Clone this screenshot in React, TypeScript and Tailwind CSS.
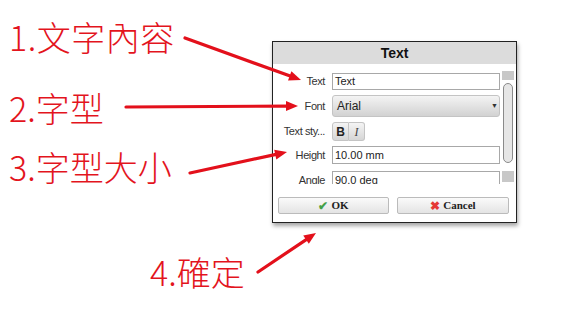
import React from "react";

type Arrow = { x1: number; y1: number; x2: number; y2: number };

const arrows: Arrow[] = [
  { x1: 185, y1: 38, x2: 301, y2: 80 },
  { x1: 126, y1: 107, x2: 298, y2: 106 },
  { x1: 190, y1: 173, x2: 287, y2: 152 },
  { x1: 258, y1: 272, x2: 316, y2: 233 },
];

function head(a: Arrow) {
  const dx = a.x2 - a.x1;
  const dy = a.y2 - a.y1;
  const len = Math.hypot(dx, dy);
  const ux = dx / len;
  const uy = dy / len;
  const L = 12;
  const W = 5;
  const bx = a.x2 - ux * L;
  const by = a.y2 - uy * L;
  const p1 = `${a.x2},${a.y2}`;
  const p2 = `${bx - uy * W},${by + ux * W}`;
  const p3 = `${bx + uy * W},${by - ux * W}`;
  return { pts: `${p1} ${p2} ${p3}`, ex: bx + ux * 2, ey: by + uy * 2 };
}

function Arrows() {
  return (
    <svg className="absolute inset-0 pointer-events-none" width={570} height={314}>
      {arrows.map((a, i) => {
        const h = head(a);
        return (
          <g key={i}>
            <line x1={a.x1} y1={a.y1} x2={h.ex} y2={h.ey} stroke="#e3101b" strokeWidth={3.2} strokeLinecap="round" />
            <polygon points={h.pts} fill="#e3101b" />
          </g>
        );
      })}
    </svg>
  );
}

const label =
  "h-[40px] leading-[40px] text-[34px] text-[#e3141d] whitespace-nowrap font-light";

function Row({ name, children, h, mt }: { name: string; children: React.ReactNode; h: string; mt: string }) {
  return (
    <div className={`flex items-center shrink-0 ${h} ${mt}`}>
      <div className="w-[53px] pr-[1px] text-right text-[11px] tracking-[-0.4px] text-[#333] whitespace-nowrap overflow-hidden">
        {name}
      </div>
      <div className="ml-[6px] flex-1 h-full">{children}</div>
    </div>
  );
}

function Dialog() {
  return (
    <div
      className="w-[245px] h-[182px] border border-[#222] bg-white shadow-[1px_3px_4px_rgba(0,0,0,0.35)] flex flex-col"
      style={{ fontFamily: '"Liberation Sans", Arial, sans-serif' }}
    >
      <div className="h-[22px] bg-[#dcdcdc] flex items-center justify-center text-[14px] font-bold text-[#111]">
        Text
      </div>
      <div className="flex h-[120px] overflow-hidden">
        <div className="flex-1 flex flex-col pt-[9px]">
          <Row name="Text" h="h-[17px]" mt="mt-0">
            <div className="h-full border border-[#a8a8a8] bg-white text-[11px] leading-[15px] px-[2px] text-[#222]">
              Text
            </div>
          </Row>
          <Row name="Font" h="h-[22px]" mt="mt-[5px]">
            <div className="h-full rounded-[3px] border border-[#c4c4c4] bg-gradient-to-b from-[#f4f4f4] to-[#d2d2d2] text-[12px] flex items-center justify-between px-[4px] text-[#222]">
              <span>Arial</span>
              <span className="text-[7px] text-[#333] mr-[-3px]">▼</span>
            </div>
          </Row>
          <Row name="Text sty..." h="h-[19px]" mt="mt-[5px]">
            <div className="h-full flex">
              <div className="w-[17px] h-full rounded-l-[3px] border border-[#c4c4c4] bg-gradient-to-b from-[#f4f4f4] to-[#d6d6d6] flex items-center justify-center text-[12px] font-bold text-[#222]">
                B
              </div>
              <div className="w-[16px] h-full rounded-r-[3px] border border-l-0 border-[#c4c4c4] bg-gradient-to-b from-[#f4f4f4] to-[#d6d6d6] flex items-center justify-center text-[12px] italic text-[#444]" style={{ fontFamily: '"Liberation Serif", serif' }}>
                I
              </div>
            </div>
          </Row>
          <Row name="Height" h="h-[18px]" mt="mt-[5px]">
            <div className="h-full border border-[#a8a8a8] bg-white text-[11px] leading-[16px] px-[2px] text-[#222]">
              10.00 mm
            </div>
          </Row>
          <Row name="Angle" h="h-[18px]" mt="mt-[7px]">
            <div className="h-full border border-[#a8a8a8] bg-white text-[11px] leading-[16px] px-[2px] text-[#222]">
              90.0 deg
            </div>
          </Row>
        </div>
        <div className="w-[16px] flex flex-col items-center pt-[7px] pl-[1px] pr-[2px]">
          <div className="w-[12px] h-[9px] bg-[#c8c8c8]" />
          <div className="mt-[3px] w-[10px] h-[80px] rounded-[5px] border border-[#8a8a8a] bg-[#e6e6e6]" />
          <div className="mt-[8px] w-[12px] h-[11px] bg-[#c8c8c8]" />
        </div>
      </div>
      <div className="flex gap-[8px] pl-[5px] pt-[13px]" style={{ fontFamily: '"Liberation Serif", serif' }}>
        <div className="w-[111px] h-[17px] border border-[#bbb] rounded-[2px] bg-gradient-to-b from-[#fafafa] to-[#e4e4e4] flex items-center justify-center text-[11px] font-bold text-[#222]">
          <span className="text-[#43a047] mr-[3px] text-[12px]">✔</span>OK
        </div>
        <div className="w-[112px] h-[17px] border border-[#bbb] rounded-[2px] bg-gradient-to-b from-[#fafafa] to-[#e4e4e4] flex items-center justify-center text-[11px] font-bold text-[#222]">
          <span className="text-[#e53935] mr-[3px] text-[12px]">✖</span>Cancel
        </div>
      </div>
    </div>
  );
}

export default function App() {
  return (
    <div
      className="relative w-[570px] h-[314px] bg-white overflow-hidden"
      style={{ fontFamily: '"Noto Sans CJK TC", "Noto Sans", sans-serif' }}
    >
      <div className="flex">
        <div className="w-[272px] flex flex-col pl-[9px] pt-[17px]">
          <div className={`${label} tracking-[0.5px]`}>1.文字內容</div>
          <div className={`${label} mt-[31px]`}>2.字型</div>
          <div className={`${label} mt-[19px]`}>3.字型大小</div>
          <div className={`${label} mt-[65px] ml-[141px]`}>4.確定</div>
        </div>
        <div className="mt-[41px]">
          <Dialog />
        </div>
      </div>
      <Arrows />
    </div>
  );
}
